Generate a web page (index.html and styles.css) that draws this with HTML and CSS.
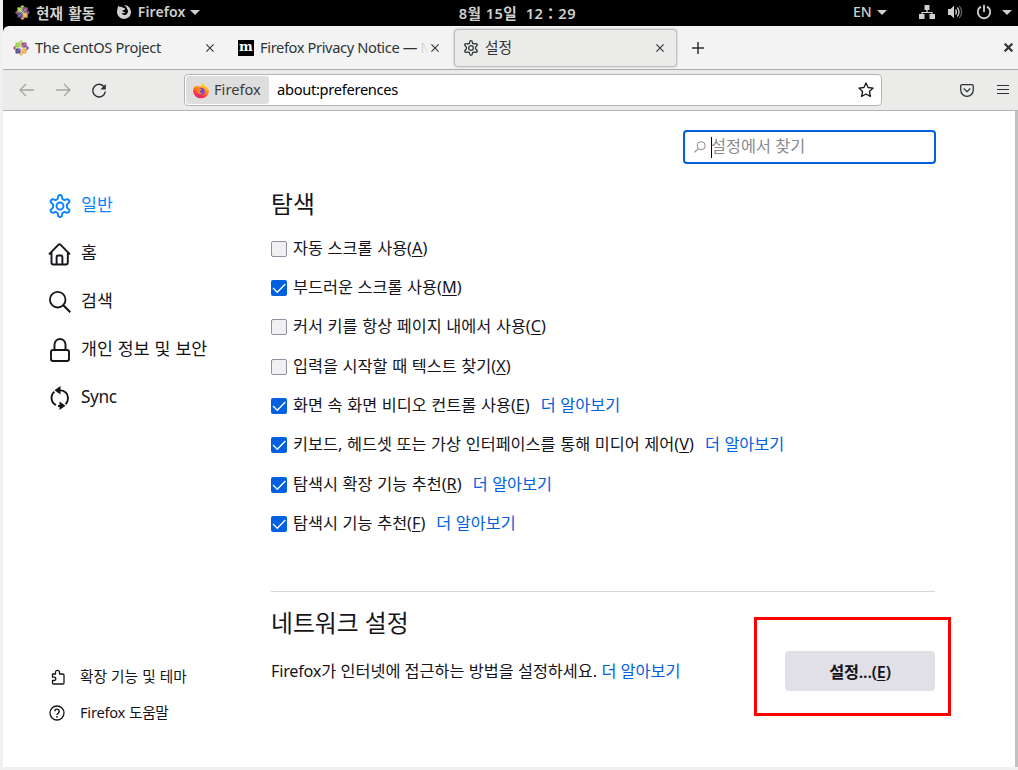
FILE: index.html
```html
<!DOCTYPE html>
<html lang="ko">
<head>
<meta charset="utf-8">
<title>설정</title>
<link rel="stylesheet" href="styles.css">
</head>
<body>
<svg class="defs" width="0" height="0">
  <symbol id="centos" viewBox="0 0 16 16">
    <path d="M2.500 2.500h5.200v5.200H2.500z" fill="#a5cf4c"/><path d="M8.300 2.500h5.200v5.200H8.300z" fill="#a14f8c"/>
    <path d="M2.500 8.300h5.200v5.200H2.500z" fill="#5b4d94"/><path d="M8.300 8.300h5.200v5.200H8.300z" fill="#efb04c"/>
    <path d="M8 0l2.700 2.500H5.300z" fill="#b3d465"/><path d="M16 8l-2.500 2.700V5.300z" fill="#5b4d94"/>
    <path d="M8 16l-2.700-2.500h5.400z" fill="#efb04c"/><path d="M0 8l2.500-2.700v5.400z" fill="#a14f8c"/>
    <path d="M8 2v12M2 8h12M4 4l8 8M12 4l-8 8" stroke="#fff" stroke-opacity=".65" stroke-width=".6"/>
  </symbol>
  <symbol id="gear" viewBox="0 0 24 24">
    <g fill="none" stroke="currentColor" stroke-width="1.900" stroke-linejoin="round">
      <path d="M10 3.200Q10 1 12 1T14 3.200L14.400 5L16.400 6.100L18.200 5.500Q20.300 4.900 21.200 6.500T20.200 9.100L18.900 10.600V13.400L20.200 14.900Q22.100 15.900 21.200 17.500T18.200 18.500L16.400 17.900L14.400 19L14 20.800Q14 23 12 23T10 20.800L9.600 19L7.600 17.900L5.800 18.500Q3.700 19.100 2.800 17.500T3.800 14.900L5.100 13.400V10.600L3.800 9.100Q1.900 8.100 2.800 6.500T5.800 5.500L7.600 6.100L9.600 5Z"/>
      <circle cx="12" cy="12" r="3.500"/>
    </g>
  </symbol>
  <symbol id="check" viewBox="0 0 16 16"><path d="M2 8l4.300 4.300L14.300 4" fill="none" stroke="#fff" stroke-width="1.300"/></symbol>
  <symbol id="x" viewBox="0 0 8 8"><path d="M.4.4l7.200 7.200M7.600.4L.4 7.600" stroke="currentColor" stroke-width="1.100"/></symbol>
  <symbol id="down" viewBox="0 0 10 5"><path d="M0 0h10L5 5z" fill="currentColor"/></symbol>
</svg>

<div class="screen">
  <div class="topbar">
    <svg class="centos-top"><use href="#centos"/></svg>
    <span class="activities">현재 활동</span>
    <svg class="app-icon" viewBox="0 0 16 16"><path d="M8 1a7 7 0 1 1-6.700 5C1.500 4.500 1.700 2.700 2.600 1.500l1 1.500C5 2.300 6 2.800 6.800 3.800l2.400.5-.7 1.600-2 .7.300 1.200 2.400.3c-.8 1.500-2.600 1.500-3.600.7.600 2.200 3.300 3 5 1.400C12.500 8.500 12.300 6 10.900 4.500 10.600 3 9.500 1.800 8 1z" fill="#d0d0ce"/></svg>
    <span class="app-name">Firefox</span>
    <svg class="caret"><use href="#down"/></svg>
    <span class="clock">8월 15일&nbsp; 12：29</span>
    <span class="lang">EN</span>
    <svg class="caret"><use href="#down"/></svg>
    <svg class="net" viewBox="0 0 16 16"><path d="M5.500 1h5v5h-5zM0 10h5.500v5H0zM10.500 10H16v5h-5.500z" fill="#d0d0ce"/><path d="M8 6v2.500M3 10V8.500h10V10" fill="none" stroke="#d0d0ce" stroke-width="1.200"/></svg>
    <svg class="vol" viewBox="0 0 16 16"><path d="M1 5h2.500L7 1.800v12.400L3.500 11H1z" fill="#d0d0ce"/><g fill="none" stroke="#d0d0ce" stroke-width="1.300"><path d="M8.500 5.500q2 2.500 0 5"/><path d="M10.300 3.500q3.500 4.500 0 9"/><path d="M12.300 1.800q4.700 6.200 0 12.400" opacity=".45"/></g></svg>
    <svg class="power" viewBox="0 0 16 16"><path d="M5 2.600a6.200 6.200 0 1 0 6 0M8 .8V8" fill="none" stroke="#d0d0ce" stroke-width="1.800"/></svg>
    <svg class="caret"><use href="#down"/></svg>
  </div>

  <div class="tabs">
    <div class="tab tab-first"><svg class="favicon"><use href="#centos"/></svg><span class="tab-title">The CentOS Project</span><svg class="close"><use href="#x"/></svg></div>
    <div class="tab tab-second"><span class="moz">m</span><span class="tab-title">Firefox Privacy Notice — <span class="faded">M</span></span><svg class="close"><use href="#x"/></svg></div>
    <div class="tab tab-active"><svg class="favicon"><use href="#gear"/></svg><span class="tab-title">설정</span><svg class="close"><use href="#x"/></svg></div>
    <svg class="plus" viewBox="0 0 12 12"><path d="M6 0v12M0 6h12" stroke="currentColor" stroke-width="1.500"/></svg>
    <svg class="win-close" viewBox="0 0 8 8"><path d="M.6.6l6.800 6.800M7.400.6L.6 7.400" stroke="currentColor" stroke-width="2"/></svg>
  </div>

  <div class="toolbar">
    <svg class="back" viewBox="0 0 16 14"><path d="M15 7H1.500M7 1L1 7l6 6" fill="none" stroke="#a5a5a4" stroke-width="1.300"/></svg>
    <svg class="forward" viewBox="0 0 16 14"><path d="M1 7h13.500M9 1l6 6-6 6" fill="none" stroke="#a5a5a4" stroke-width="1.300"/></svg>
    <svg class="reload" viewBox="0 0 16 16"><path d="M13.200 4A6.300 6.300 0 1 0 14.300 8.500" fill="none" stroke="#2e3436" stroke-width="1.500"/><path d="M14.800 1v5.500H9.300z" fill="#2e3436"/></svg>
    <div class="urlbar">
      <div class="identity">
        <svg class="fx" viewBox="0 0 16 16">
          <defs><linearGradient id="flame" x1=".8" y1="0" x2=".3" y2="1"><stop offset="0" stop-color="#fff44f"/><stop offset=".4" stop-color="#ff980e"/><stop offset=".75" stop-color="#ff3647"/><stop offset="1" stop-color="#e31587"/></linearGradient></defs>
          <path d="M10 0c.2 1.300 1.300 2 2.300 2.900C14.600 4 15.900 6 15.900 8.500A7.900 7.700 0 0 1 .2 8.500C.1 6.300.8 4.500 2 3l.4 1.200L4.300 2l.4 1.500c1.500-.5 3 .1 3.600.4C8.300 2 9 .8 10 0z" fill="url(#flame)"/>
          <circle cx="8.200" cy="8.200" r="3.500" fill="#7542e5"/><path d="M3.500 5.500c1.600-1 3.500-.7 4.500.8l1 .2c-.4 1-1.400 1.200-2.300 1.500-.3 1.600 1.600 2.400 3.300 1.600-2 3.300-6.900 1.400-6.500-4.100z" fill="#ff8a16"/>
        </svg>
        <span>Firefox</span>
      </div>
      <span class="url">about:preferences</span>
      <svg class="star" viewBox="0 0 16 16"><path d="M8 1l2.100 4.500 5 .6-3.700 3.400 1 5L8 12l-4.400 2.500 1-5L.9 6.100l5-.6z" fill="none" stroke="#15141a" stroke-width="1.300" stroke-linejoin="round"/></svg>
    </div>
    <svg class="pocket" viewBox="0 0 14 13"><path d="M2.200.7h9.600q1.500 0 1.500 1.500v3.500C13.300 9.500 10.500 12.300 7 12.300S.7 9.500.7 5.700V2.200Q.7.700 2.200.7zM3.700 4.500L7 7.700l3.300-3.200" fill="none" stroke="#2e3436" stroke-width="1.300"/></svg>
    <svg class="menu" viewBox="0 0 12 10"><path d="M0 .5h12M0 4.500h12M0 8.500h12" stroke="#2e3436" stroke-width="1"/></svg>
  </div>

  <div class="page">
    <nav class="sidebar">
      <div class="cat selected"><svg viewBox="0 0 24 24"><use href="#gear"/></svg><span>일반</span></div>
      <div class="cat"><svg viewBox="0 0 24 24"><path d="M1 12.300L10.300 2.800q1.200-1.200 2.400 0L22 12.300M3.500 10v10.500q0 2 2 2h12.300q2 0 2-2V10M8.600 22v-6.500q0-2 1.500-2h2.800q1.500 0 1.500 2V22" fill="none" stroke="currentColor" stroke-width="1.900"/></svg><span>홈</span></div>
      <div class="cat"><svg viewBox="0 0 24 24"><circle cx="9.700" cy="9.700" r="7.800" fill="none" stroke="currentColor" stroke-width="1.800"/><path d="M15.300 15.300l7 7" stroke="currentColor" stroke-width="2"/></svg><span>검색</span></div>
      <div class="cat"><svg viewBox="0 0 24 24"><rect x="3" y="12" width="18" height="11" rx="2" fill="none" stroke="currentColor" stroke-width="1.900"/><path d="M6.500 12V6.500a5.500 5.500 0 0 1 11 0V12" fill="none" stroke="currentColor" stroke-width="1.900"/></svg><span>개인 정보 및 보안</span></div>
      <div class="cat sync"><svg viewBox="0 0 24 24"><path d="M6.400 5.700A8 8 0 0 0 8 19M11 4.100Q19.800 4.500 20 12q0 4-2.400 6.300M13 19.900q-1.500.3-3-.1" fill="none" stroke="currentColor" stroke-width="1.900"/><path d="M12.500 0v8.400L6.500 4.200zM11.500 15.600V24l6-4.200z" fill="currentColor"/></svg><span>Sync</span></div>
      <div class="footer-links">
        <div class="small"><svg viewBox="0 0 16 16"><path d="M2.500 5h3V3.300a2 2 0 0 1 4 0V5h3.300q1.200 0 1.200 1.200v7.600q0 1.200-1.200 1.200H3.700q-1.200 0-1.200-1.200v-2.300h1.700a1.500 1.500 0 0 0 0-3.300H2.500z" fill="none" stroke="currentColor" stroke-width="1.300" stroke-linejoin="round"/></svg><span>확장 기능 및 테마</span></div>
        <div class="small help"><svg viewBox="0 0 16 16"><circle cx="8" cy="8" r="7" fill="none" stroke="currentColor" stroke-width="1.300"/><path d="M5.800 6.300a2.200 2.200 0 1 1 3.500 1.800Q8 8.900 8 10" fill="none" stroke="currentColor" stroke-width="1.400"/><circle cx="8" cy="11.800" r=".9" fill="currentColor"/></svg><span>Firefox 도움말</span></div>
      </div>
    </nav>

    <main class="content">
      <div class="search"><svg viewBox="0 0 12 12"><circle cx="7.200" cy="4.700" r="4" fill="none" stroke="#8c8c90"/><path d="M4.300 7.600L.5 11.400" stroke="#8c8c90" stroke-width="1.200"/></svg><i class="cursor"></i><span>설정에서 찾기</span></div>
      <h2>탐색</h2>
      <div class="options">
        <div class="opt"><i class="box"></i><span>자동 스크롤 사용(<u>A</u>)</span></div>
        <div class="opt"><i class="box on"><svg><use href="#check"/></svg></i><span>부드러운 스크롤 사용(<u>M</u>)</span></div>
        <div class="opt"><i class="box"></i><span>커서 키를 항상 페이지 내에서 사용(<u>C</u>)</span></div>
        <div class="opt"><i class="box"></i><span>입력을 시작할 때 텍스트 찾기(<u>X</u>)</span></div>
        <div class="opt"><i class="box on"><svg><use href="#check"/></svg></i><span>화면 속 화면 비디오 컨트롤 사용(<u>E</u>)</span><a>더 알아보기</a></div>
        <div class="opt"><i class="box on"><svg><use href="#check"/></svg></i><span>키보드, 헤드셋 또는 가상 인터페이스를 통해 미디어 제어(<u>V</u>)</span><a>더 알아보기</a></div>
        <div class="opt"><i class="box on"><svg><use href="#check"/></svg></i><span>탐색시 확장 기능 추천(<u>R</u>)</span><a>더 알아보기</a></div>
        <div class="opt"><i class="box on"><svg><use href="#check"/></svg></i><span>탐색시 기능 추천(<u>F</u>)</span><a>더 알아보기</a></div>
      </div>
      <section class="network">
        <h2>네트워크 설정</h2>
        <div class="network-row">
          <p><span class="latin">Firefox</span>가 인터넷에 접근하는 방법을 설정하세요. <a>더 알아보기</a></p>
          <div class="button">설정...(<u>E</u>)</div>
        </div>
      </section>
    </main>
    <div class="scrollbar"></div>
    <div class="highlight"></div>
  </div>
</div>
</body>
</html>
```

FILE: styles.css
```css
* { box-sizing: border-box; }
body {
  margin: 0;
  width: 1018px;
  height: 770px;
  overflow: hidden;
  background: #f0f0f0;
  font: 14.67px/20px "Noto Sans", "Noto Sans CJK KR", sans-serif;
  color: #15141a;
}
svg { display: block; flex: none; }
.defs { position: absolute; }
.screen {
  display: flex;
  flex-direction: column;
  height: 767px;
  margin-left: 3px;
  background: #000;
  white-space: nowrap;
}

/* desktop bar */
.topbar {
  display: flex;
  align-items: center;
  height: 26px;
  padding: 0 6px 2px 12px;
  color: #d0d0ce;
  font-size: 14px;
  font-weight: 600;
}
.centos-top { width: 15px; height: 15px; margin-right: 6px; }
.activities { width: 80px; margin-top: 2px; font-size: 14.67px; word-spacing: 1.5px; }
.app-icon { width: 16px; height: 16px; margin-right: 6px; }
.app-name { width: 52px; letter-spacing: 0.1px; }
.caret { width: 10px; height: 5px; margin-top: 1px; }
.clock { width: 395px; margin: 2px 0 0 259px; font-size: 14.67px; letter-spacing: 0.42px; }
.lang { width: 24px; font-weight: 500; }
.net { width: 16px; height: 16px; margin-left: 32px; }
.vol { width: 16px; height: 16px; margin-left: 12px; }
.power { width: 16px; height: 16px; margin-left: 13px; }
.power + .caret { margin-left: 10px; }

/* tab strip */
.tabs {
  display: flex;
  align-items: center;
  height: 44px;
  padding-left: 2px;
  background: #f3f3f3;
  border-bottom: 1px solid #a9a9a9;
  border-top-left-radius: 6px;
  color: #2e3436;
}
.tab { display: flex; flex: none; align-items: center; height: 38px; padding: 0 13px 0 8px; }
.tab-first { width: 225px; padding-right: 16px; }
.tab-second { width: 224px; padding-right: 15px; }
.tab-active {
  width: 223px;
  padding-right: 12px;
  background: #ebebea;
  border: 1px solid #bfbfc8;
  border-radius: 4px;
  box-shadow: 0 0 2px #aaaab8;
}
.favicon { width: 16px; height: 16px; margin-right: 6px; }
.tab-title { flex: 1; margin-top: -2px; letter-spacing: -0.36px; }
.tab-second .tab-title { letter-spacing: -0.38px; }
.tab-second .close { margin-left: -5px; }
.tab-active .tab-title { letter-spacing: 0; }
.tab-first .favicon { margin-right: 6px; }
.faded {
  color: transparent;
  background: linear-gradient(to right, #c4c4c4, #f3f3f3 70%);
  -webkit-background-clip: text;
  background-clip: text;
}
.moz {
  width: 16px;
  height: 16px;
  margin-right: 6px;
  background: #000;
  color: #fff;
  font: bold 13px/14px "DejaVu Serif", serif;
  text-align: center;
}
.close { width: 8px; height: 8px; }
.plus { width: 12px; height: 12px; margin-left: 15px; }
.win-close { width: 9px; height: 9px; margin-left: auto; margin-right: 5px; }

/* navigation */
.toolbar {
  display: flex;
  align-items: center;
  height: 41px;
  padding-left: 16px;
  background: #ebebea;
  border-bottom: 1px solid #b4b4b4;
}
.back, .forward { width: 16px; height: 14px; margin-right: 20px; }
.reload { width: 16px; height: 16px; margin-top: 1px; }
.urlbar {
  display: flex;
  align-items: center;
  width: 698px;
  height: 32px;
  margin-left: 77px;
  padding: 0 7px 0 1px;
  background: #fff;
  border: 1px solid #b4b4b4;
  border-radius: 4px;
}
.identity {
  display: flex;
  align-items: center;
  width: 83px;
  height: 28px;
  padding-left: 7px;
  background: #dedede;
  border-radius: 3px;
  color: #3b3b3d;
}
.identity span { margin-top: -2px; }
.fx { width: 16px; height: 16px; margin-right: 5px; margin-top: 1px; }
.url { flex: 1; margin: -2px 0 0 8px; color: #000; letter-spacing: -0.3px; }
.star { width: 16px; height: 16px; }
.pocket { width: 14px; height: 13px; margin-left: 78px; }
.menu { width: 12px; height: 10px; margin-left: 23px; }

/* preferences */
.page { position: relative; display: flex; flex: 1; background: #fff; }
.sidebar { display: flex; flex-direction: column; width: 268px; padding: 70px 0 36px 45px; }
.cat { display: flex; align-items: center; height: 48px; gap: 9px; font-size: 17.3px; word-spacing: 0.5px; }
.cat svg { width: 24px; height: 24px; margin-top: 2px; }
.cat span { margin-top: -1px; }
.sync span { margin-top: 0; letter-spacing: -0.4px; }
.selected { color: #0a84ff; }
.footer-links { margin-top: auto; }
.small { display: flex; align-items: center; height: 36px; gap: 14px; padding-left: 2px; word-spacing: 0.3px; }
.small svg { width: 16px; height: 16px; }
.small span { margin-top: -2px; }
.help svg { margin-left: -1px; margin-right: 1px; }
.help span { letter-spacing: -0.25px; }
.content { width: 664px; padding-top: 19px; font-size: 16.3px; }
.search {
  display: flex;
  align-items: center;
  width: 253px;
  height: 34px;
  margin-left: 412px;
  padding: 0 8px 2px;
  border: 2px solid #0060df;
  border-radius: 4px;
  color: #8a8a8e;
}
.search svg { width: 12px; height: 12px; margin: 2px 5px 0 1px; }
.cursor { width: 1px; height: 21px; margin-top: 2px; background: #000; }
.search span { margin-left: -1px; }
h2 { margin: 0; font-size: 23.8px; line-height: 34px; font-weight: 400; }
.content > h2 { margin-top: 23px; }
.options { margin-top: 8.2px; }
.opt { display: flex; align-items: center; height: 39.3px; }
.opt span { margin: -2px 0 0 6px; word-spacing: 0.4px; }
.opt a { margin: -2px 0 0 11px; word-spacing: 0.3px; }
.box { width: 16px; height: 16px; background: #f0f0f3; border: 1px solid #8f8f9d; border-radius: 2px; }
.box.on { border: 0; background: #0060df; }
.box svg { width: 16px; height: 16px; }
a { color: #0060df; }
u { text-underline-offset: 2px; text-decoration-thickness: 1px; }
.network { margin-top: 47.4px; border-top: 1px solid #d7d7db; padding-top: 14px; }
.network-row { display: flex; justify-content: space-between; margin-top: 11px; }
.network p { margin: 10px 0 0; }
.latin { letter-spacing: -0.25px; }
.button {
  width: 150px;
  height: 40px;
  background: #e0e0e6;
  border-radius: 4px;
  font-weight: 600;
  letter-spacing: -0.2px;
  line-height: 42px;
  text-align: center;
}
.scrollbar { width: 3px; margin-left: auto; background: #c1c1c1; }
.highlight {
  position: absolute;
  left: 751px;
  top: 506px;
  width: 197px;
  height: 99px;
  border: 3px solid #f00;
}
```
